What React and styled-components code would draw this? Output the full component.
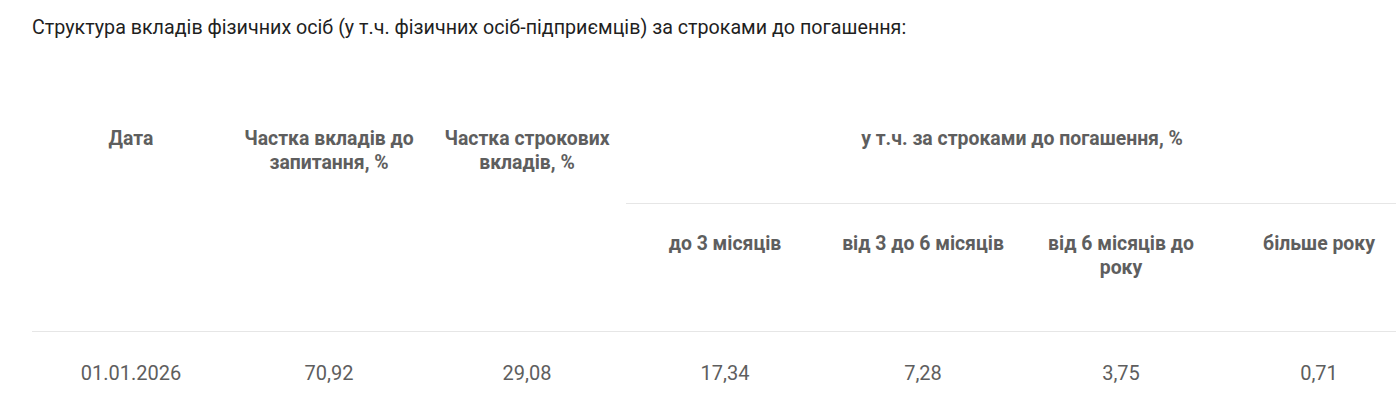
import React from 'react'
import styled, { createGlobalStyle } from 'styled-components'

const GlobalStyle = createGlobalStyle`
    html, body {
        margin: 0;
        padding: 0;
        background: #fff;
        overflow: hidden;
    }
    body {
        font-family: Roboto, "Liberation Sans", sans-serif;
    }
`

const Page = styled.div`
    padding: 16px 0 0 32px;
`

const Title = styled.p`
    margin: 0 0 59px;
    font-size: 19.7px;
    line-height: 24px;
    color: #1f1f1f;
`

const Table = styled.table`
    border-collapse: collapse;
    table-layout: fixed;
    width: 1386px;
`

const Col = styled.col`
    width: 198px;
`

const HeadCell = styled.th`
    padding: 28px 10px ${props => props.bottom || 52}px;
    vertical-align: top;
    text-align: center;
    font-size: 19.4px;
    line-height: 24px;
    font-weight: 700;
    color: #5e5e5e;
    border-bottom: 1px solid #e6e6e6;
`

const Cell = styled.td`
    padding: 29px 10px 30px;
    text-align: center;
    font-size: 20px;
    line-height: 24px;
    color: #5e5e5e;
`

const terms = ['до 3 місяців', 'від 3 до 6 місяців', 'від 6 місяців до року', 'більше року']
const row = ['01.01.2026', '70,92', '29,08', '17,34', '7,28', '3,75', '0,71']

export default function App() {
    return (
        <>
            <GlobalStyle />
            <Page>
                <Title>
                    Структура вкладів фізичних осіб (у т.ч. фізичних осіб-підприємців) за строками до погашення:
                </Title>
                <Table>
                    <colgroup>
                        {row.map((_, i) => <Col key={i} />)}
                    </colgroup>
                    <thead>
                        <tr>
                            <HeadCell rowSpan={2}>Дата</HeadCell>
                            <HeadCell rowSpan={2}>Частка вкладів до запитання, %</HeadCell>
                            <HeadCell rowSpan={2}>Частка строкових вкладів, %</HeadCell>
                            <HeadCell colSpan={4}>у т.ч. за строками до погашення, %</HeadCell>
                        </tr>
                        <tr>
                            {terms.map(t => (
                                <HeadCell key={t} bottom={51}>{t}</HeadCell>
                            ))}
                        </tr>
                    </thead>
                    <tbody>
                        <tr>
                            {row.map((v, i) => (
                                <Cell key={i}>{v}</Cell>
                            ))}
                        </tr>
                    </tbody>
                </Table>
            </Page>
        </>
    )
}
